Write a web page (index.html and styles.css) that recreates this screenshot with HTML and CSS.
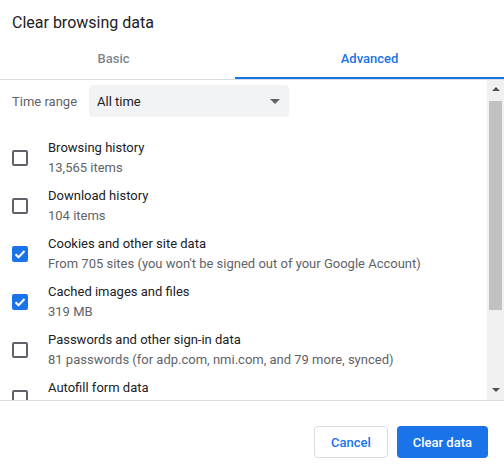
FILE: index.html
```html
<!DOCTYPE html>
<html lang="en">
<head>
    <meta charset="UTF-8">
    <title>Clear browsing data</title>
    <link rel="stylesheet" href="styles.css">
</head>
<body>

    <div class="dialog">
        <div class="title">Clear browsing data</div>

        <div class="tabs">
            <div class="tab tab-basic">Basic</div>
            <div class="tab active">Advanced</div>
        </div>

        <div class="body">
            <div class="scroll-content">
                <div class="time-range">
                    <span class="time-label">Time range</span>
                    <div class="select">
                        <span>All time</span>
                        <span class="select-arrow"></span>
                    </div>
                </div>

                <div class="option">
                    <span class="checkbox"></span>
                    <div class="option-text">
                        <div class="option-title">Browsing history</div>
                        <div class="option-sub">13,565 items</div>
                    </div>
                </div>

                <div class="option">
                    <span class="checkbox"></span>
                    <div class="option-text">
                        <div class="option-title">Download history</div>
                        <div class="option-sub">104 items</div>
                    </div>
                </div>

                <div class="option">
                    <span class="checkbox checked">
                        <svg width="16" height="16" viewBox="0 0 16 16"><path d="M3.5 8.2l3 3 6-6.2" fill="none" stroke="#fff" stroke-width="2"/></svg>
                    </span>
                    <div class="option-text">
                        <div class="option-title">Cookies and other site data</div>
                        <div class="option-sub">From 705 sites (you won't be signed out of your Google Account)</div>
                    </div>
                </div>

                <div class="option">
                    <span class="checkbox checked">
                        <svg width="16" height="16" viewBox="0 0 16 16"><path d="M3.5 8.2l3 3 6-6.2" fill="none" stroke="#fff" stroke-width="2"/></svg>
                    </span>
                    <div class="option-text">
                        <div class="option-title">Cached images and files</div>
                        <div class="option-sub">319 MB</div>
                    </div>
                </div>

                <div class="option">
                    <span class="checkbox"></span>
                    <div class="option-text">
                        <div class="option-title">Passwords and other sign-in data</div>
                        <div class="option-sub">81 passwords (for adp.com, nmi.com, and 79 more, synced)</div>
                    </div>
                </div>

                <div class="option">
                    <span class="checkbox"></span>
                    <div class="option-text">
                        <div class="option-title">Autofill form data</div>
                        <div class="option-sub">&nbsp;</div>
                    </div>
                </div>
            </div>

            <div class="scrollbar">
                <span class="arrow-up"></span>
                <div class="thumb"></div>
                <span class="arrow-down"></span>
            </div>
        </div>

        <div class="footer">
            <button class="btn btn-cancel">Cancel</button>
            <button class="btn btn-primary">Clear data</button>
        </div>
    </div>

</body>
</html>
```

FILE: styles.css
```css
:root {
    --blue: #1a73e8;
    --text-dark: #202124;
    --text-medium: #5f6368;
    --text-light: #80868b;
    --divider: #dadce0;
}

* {
    box-sizing: border-box;
    margin: 0;
    padding: 0;
}

body {
    font-family: Roboto, 'Noto Sans', sans-serif;
    font-size: 13px;
    color: var(--text-dark);
    background: #fff;
}

.dialog {
    width: 504px;
    height: 471px;
    display: flex;
    flex-direction: column;
    overflow: hidden;
}

.title {
    padding: 13px 12px 0;
    font-size: 16px;
    line-height: 20px;
    height: 38px;
}

.tabs {
    display: flex;
    border-bottom: 1px solid var(--divider);
}

.tab {
    height: 41px;
    display: flex;
    align-items: center;
    justify-content: center;
    padding-top: 1px;
    font-weight: 500;
    color: var(--text-light);
    border-bottom: 2px solid transparent;
}

.tab-basic {
    width: 235px;
    padding-right: 8px;
}

.tab.active {
    flex: 1;
    color: var(--blue);
    border-bottom-color: var(--blue);
}

.body {
    height: 321px;
    display: flex;
    border-bottom: 1px solid var(--divider);
}

.scroll-content {
    flex: 1;
    overflow: hidden;
}

.time-range {
    display: flex;
    align-items: center;
    padding: 5px 12px 0;
}

.time-label {
    width: 77px;
    color: var(--text-medium);
}

.select {
    width: 200px;
    height: 32px;
    background: #f1f3f4;
    border-radius: 4px;
    display: flex;
    align-items: center;
    justify-content: space-between;
    padding: 0 9px 0 8px;
}

.select-arrow {
    width: 0;
    height: 0;
    border-left: 5px solid transparent;
    border-right: 5px solid transparent;
    border-top: 5px solid var(--text-medium);
}

.time-range + .option {
    margin-top: 17px;
}

.option {
    height: 48px;
    display: flex;
    align-items: center;
    padding: 0 12px;
    gap: 20px;
}

.checkbox {
    width: 16px;
    height: 16px;
    flex-shrink: 0;
    border: 2px solid var(--text-medium);
    border-radius: 2px;
}

.checkbox.checked {
    border: none;
    background: var(--blue);
}

.checkbox svg {
    display: block;
}

.option-title {
    line-height: 20px;
}

.option-sub {
    line-height: 20px;
    color: var(--text-medium);
}

.scrollbar {
    width: 17px;
    background: #f1f1f1;
    display: flex;
    flex-direction: column;
    align-items: center;
    padding: 7px 0 8px;
}

.arrow-up,
.arrow-down {
    width: 0;
    height: 0;
    border-left: 4px solid transparent;
    border-right: 4px solid transparent;
}

.arrow-up {
    border-bottom: 4px solid #505050;
}

.arrow-down {
    border-top: 4px solid #505050;
    margin-top: auto;
}

.thumb {
    width: 13px;
    height: 209px;
    margin-top: 10px;
    background: #c1c1c1;
}

.footer {
    display: flex;
    justify-content: flex-end;
    gap: 9px;
    padding: 25px 16px 0;
}

.btn {
    height: 32px;
    padding: 0 16px;
    border-radius: 4px;
    font-family: inherit;
    font-size: 13px;
    font-weight: 500;
    cursor: pointer;
}

.btn-cancel {
    background: #fff;
    color: var(--blue);
    border: 1px solid var(--divider);
}

.btn-primary {
    background: var(--blue);
    color: #fff;
    border: none;
}
```
